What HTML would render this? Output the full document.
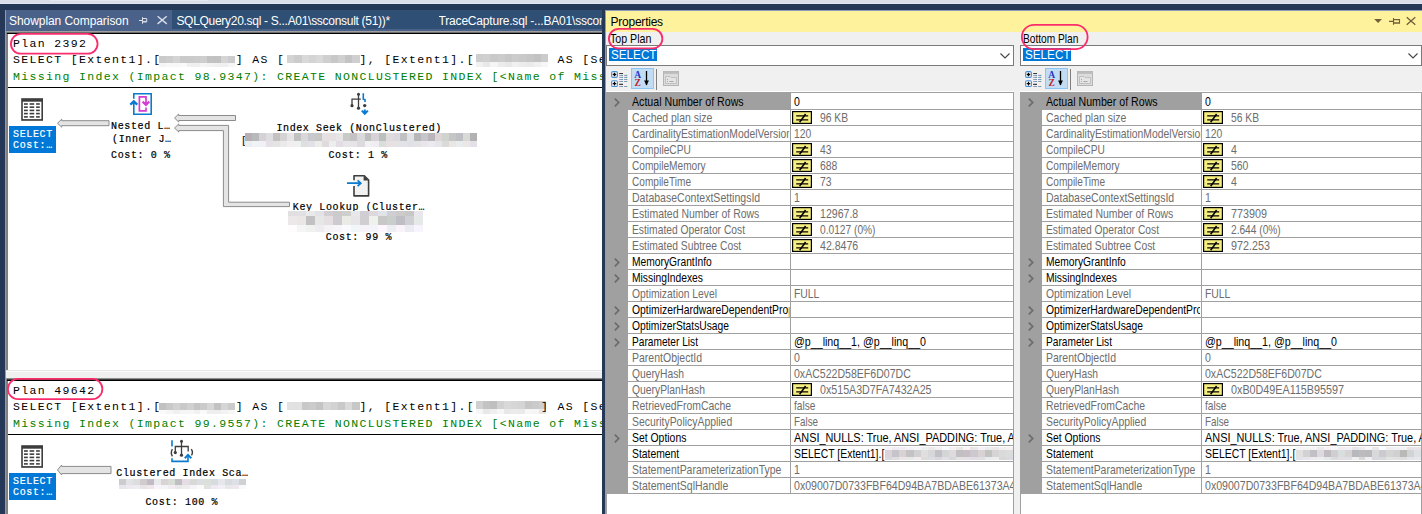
<!DOCTYPE html><html><head><meta charset="utf-8"><title>Showplan Comparison</title><style>
html,body{margin:0;padding:0;}
body{width:1422px;height:514px;overflow:hidden;background:#253858;position:relative;font-family:"Liberation Sans",sans-serif;}
#root{position:absolute;left:0;top:0;width:1422px;height:514px;overflow:hidden;}
#root div,#root span,#root svg{position:absolute;box-sizing:border-box;}
.t{white-space:pre;line-height:20px;height:20px;}
.mono{font-family:"Liberation Mono",monospace;font-size:11.5px;letter-spacing:1.35px;color:#000;}
.green{color:#008000;}
.node{font-family:"Liberation Mono",monospace;font-size:10px;letter-spacing:0.62px;color:#000;-webkit-text-stroke:0.2px #000;}
.tab{font-family:"Liberation Sans",sans-serif;font-size:12px;color:#fff;}
.ui{font-family:"Liberation Sans",sans-serif;font-size:12.2px;color:#000;transform-origin:0 0;}
.g{color:#6d6d6d;}
</style></head><body><div id="root">
<div style="left:0px;top:0px;width:1422px;height:4px;background:#DADEE9;"></div>
<div style="left:0px;top:3px;width:1422px;height:1px;background:#E2E5EE;"></div>
<div style="left:50px;top:0px;width:158px;height:1px;background:#E4E7F0;"></div>
<div style="left:600px;top:0px;width:130px;height:1px;background:#E0E3EC;"></div>
<div style="left:0px;top:4px;width:1422px;height:6px;background:#253858;"></div>
<div style="left:5px;top:10px;width:597px;height:21px;background:#2F4F74;"></div>
<div style="left:5px;top:10px;width:167px;height:21px;background:#4A6189;"></div>
<div style="left:5px;top:29px;width:597px;height:2px;background:#4A6189;"></div>
<span class="t tab" style="left:9.00px;top:11px;letter-spacing:-0.061px;">Showplan Comparison</span>
<span class="t tab" style="left:176.40px;top:11px;letter-spacing:-0.292px;">SQLQuery20.sql - S...A01\ssconsult (51))*</span>
<span class="t tab" style="left:438.60px;top:11px;width:163.40px;overflow:hidden;letter-spacing:-0.193px;">TraceCapture.sql -...BA01\sscon</span>
<svg style="left:138px;top:14px" width="30" height="14" viewBox="0 0 30 14"><g fill="none" stroke="#D9DEEA" stroke-width="1"><path d="M1 6.5h3.5M4.5 3.2v6.6M4.5 4.5h4.2v3.5h-4.2M4.5 7.4h4.2"/><path d="M19.6 2.3l9.2 7.6M28.8 2.3l-9.2 7.6" stroke-width="1.4"/></g></svg>
<div style="left:5px;top:10px;width:1px;height:504px;background:#8E9BBC;"></div>
<div style="left:6px;top:31px;width:2px;height:483px;background:#808080;"></div>
<div style="left:8px;top:34px;width:594px;height:336px;background:#fff;"></div>
<div style="left:6px;top:31px;width:596px;height:1px;background:#A0A0A0;"></div>
<div style="left:7px;top:32px;width:595px;height:1px;background:#6E6E6E;"></div>
<div style="left:7px;top:33px;width:595px;height:1px;background:#000;"></div>
<div style="left:8px;top:87px;width:594px;height:1px;background:#000;"></div>
<div style="left:6px;top:370px;width:596px;height:8px;background:#EFEFEF;"></div>
<div style="left:6px;top:370px;width:596px;height:1px;background:#E6E6E6;"></div>
<div style="left:6px;top:371px;width:596px;height:1px;background:#FAFAFA;"></div>
<div style="left:6px;top:378px;width:596px;height:1px;background:#8E8E8E;"></div>
<div style="left:7px;top:379px;width:595px;height:1px;background:#3C3C3C;"></div>
<div style="left:7px;top:380px;width:595px;height:1px;background:#000;"></div>
<div style="left:8px;top:381px;width:594px;height:133px;background:#fff;"></div>
<div style="left:8px;top:434px;width:594px;height:1px;background:#000;"></div>
<span class="t mono" style="left:13.00px;top:34px;">Plan 2392</span>
<span class="t mono" style="left:13.00px;top:50px;">SELECT [Extent1].[</span>
<span class="t mono" style="left:235.75px;top:50px;">] AS [</span>
<span class="t mono" style="left:359.50px;top:50px;">], [Extent1].[</span>
<span class="t mono" style="left:549.25px;top:50px;width:52.75px;overflow:hidden;"> AS [Se</span>
<div style="left:159.3px;top:56.1px;width:75.8px;height:7.0px;background:linear-gradient(90deg,rgb(202,202,202) 0.0px,rgb(202,202,202) 6.9px,rgb(205,205,205) 6.9px,rgb(205,205,205) 13.8px,rgb(212,212,212) 13.8px,rgb(212,212,212) 20.7px,rgb(202,202,202) 20.7px,rgb(202,202,202) 27.6px,rgb(202,202,202) 27.6px,rgb(202,202,202) 34.5px,rgb(204,204,204) 34.5px,rgb(204,204,204) 41.3px,rgb(206,206,206) 41.3px,rgb(206,206,206) 48.2px,rgb(194,194,194) 48.2px,rgb(194,194,194) 55.1px,rgb(193,193,193) 55.1px,rgb(193,193,193) 62.0px,rgb(213,213,213) 62.0px,rgb(213,213,213) 68.9px,rgb(204,204,204) 68.9px,rgb(204,204,204) 75.8px);"></div>
<div style="left:159.3px;top:63.1px;width:75.8px;height:3.8px;background:linear-gradient(90deg,rgb(245,245,245) 0.0px,rgb(245,245,245) 6.9px,rgb(248,248,248) 6.9px,rgb(248,248,248) 13.8px,rgb(247,247,247) 13.8px,rgb(247,247,247) 20.7px,rgb(250,250,250) 20.7px,rgb(250,250,250) 27.6px,rgb(240,240,240) 27.6px,rgb(240,240,240) 34.5px,rgb(239,239,239) 34.5px,rgb(239,239,239) 41.3px,rgb(245,245,245) 41.3px,rgb(245,245,245) 48.2px,rgb(242,242,242) 48.2px,rgb(242,242,242) 55.1px,rgb(240,240,240) 55.1px,rgb(240,240,240) 62.0px,rgb(239,239,239) 62.0px,rgb(239,239,239) 68.9px,rgb(246,246,246) 68.9px,rgb(246,246,246) 75.8px);"></div>
<div style="left:287.2px;top:55.1px;width:72.6px;height:8.0px;background:linear-gradient(90deg,rgb(211,211,211) 0.0px,rgb(211,211,211) 7.3px,rgb(204,204,204) 7.3px,rgb(204,204,204) 14.5px,rgb(217,217,217) 14.5px,rgb(217,217,217) 21.8px,rgb(212,212,212) 21.8px,rgb(212,212,212) 29.0px,rgb(217,217,217) 29.0px,rgb(217,217,217) 36.3px,rgb(207,207,207) 36.3px,rgb(207,207,207) 43.6px,rgb(200,200,200) 43.6px,rgb(200,200,200) 50.8px,rgb(208,208,208) 50.8px,rgb(208,208,208) 58.1px,rgb(196,196,196) 58.1px,rgb(196,196,196) 65.3px,rgb(207,207,207) 65.3px,rgb(207,207,207) 72.6px);"></div>
<div style="left:475.6px;top:54.1px;width:72.0px;height:8.2px;background:linear-gradient(90deg,rgb(206,206,206) 0.0px,rgb(206,206,206) 7.2px,rgb(208,208,208) 7.2px,rgb(208,208,208) 14.4px,rgb(201,201,201) 14.4px,rgb(201,201,201) 21.6px,rgb(204,204,204) 21.6px,rgb(204,204,204) 28.8px,rgb(199,199,199) 28.8px,rgb(199,199,199) 36.0px,rgb(204,204,204) 36.0px,rgb(204,204,204) 43.2px,rgb(201,201,201) 43.2px,rgb(201,201,201) 50.4px,rgb(198,198,198) 50.4px,rgb(198,198,198) 57.6px,rgb(194,194,194) 57.6px,rgb(194,194,194) 64.8px,rgb(203,203,203) 64.8px,rgb(203,203,203) 72.0px);"></div>
<div style="left:475.6px;top:62.3px;width:72.0px;height:4.6px;background:linear-gradient(90deg,rgb(241,241,241) 0.0px,rgb(241,241,241) 7.2px,rgb(232,232,232) 7.2px,rgb(232,232,232) 14.4px,rgb(245,245,245) 14.4px,rgb(245,245,245) 21.6px,rgb(236,236,236) 21.6px,rgb(236,236,236) 28.8px,rgb(232,232,232) 28.8px,rgb(232,232,232) 36.0px,rgb(240,240,240) 36.0px,rgb(240,240,240) 43.2px,rgb(236,236,236) 43.2px,rgb(236,236,236) 50.4px,rgb(234,234,234) 50.4px,rgb(234,234,234) 57.6px,rgb(240,240,240) 57.6px,rgb(240,240,240) 64.8px,rgb(246,246,246) 64.8px,rgb(246,246,246) 72.0px);"></div>
<span class="t mono green" style="left:13.00px;top:67px;width:589.00px;overflow:hidden;">Missing Index (Impact 98.9347): CREATE NONCLUSTERED INDEX [&lt;Name of Miss</span>
<span class="t mono" style="left:13.00px;top:381px;">Plan 49642</span>
<span class="t mono" style="left:13.00px;top:397px;">SELECT [Extent1].[</span>
<span class="t mono" style="left:235.75px;top:397px;">] AS [</span>
<span class="t mono" style="left:359.50px;top:397px;">], [Extent1].[</span>
<span class="t mono" style="left:549.25px;top:397px;width:52.75px;overflow:hidden;"> AS [Se</span>
<div style="left:159.3px;top:403.1px;width:75.8px;height:7.0px;background:linear-gradient(90deg,rgb(193,193,193) 0.0px,rgb(193,193,193) 6.9px,rgb(201,201,201) 6.9px,rgb(201,201,201) 13.8px,rgb(210,210,210) 13.8px,rgb(210,210,210) 20.7px,rgb(201,201,201) 20.7px,rgb(201,201,201) 27.6px,rgb(208,208,208) 27.6px,rgb(208,208,208) 34.5px,rgb(197,197,197) 34.5px,rgb(197,197,197) 41.3px,rgb(203,203,203) 41.3px,rgb(203,203,203) 48.2px,rgb(214,214,214) 48.2px,rgb(214,214,214) 55.1px,rgb(194,194,194) 55.1px,rgb(194,194,194) 62.0px,rgb(213,213,213) 62.0px,rgb(213,213,213) 68.9px,rgb(203,203,203) 68.9px,rgb(203,203,203) 75.8px);"></div>
<div style="left:159.3px;top:410.1px;width:75.8px;height:3.8px;background:linear-gradient(90deg,rgb(250,250,250) 0.0px,rgb(250,250,250) 6.9px,rgb(246,246,246) 6.9px,rgb(246,246,246) 13.8px,rgb(240,240,240) 13.8px,rgb(240,240,240) 20.7px,rgb(246,246,246) 20.7px,rgb(246,246,246) 27.6px,rgb(246,246,246) 27.6px,rgb(246,246,246) 34.5px,rgb(241,241,241) 34.5px,rgb(241,241,241) 41.3px,rgb(250,250,250) 41.3px,rgb(250,250,250) 48.2px,rgb(238,238,238) 48.2px,rgb(238,238,238) 55.1px,rgb(238,238,238) 55.1px,rgb(238,238,238) 62.0px,rgb(243,243,243) 62.0px,rgb(243,243,243) 68.9px,rgb(247,247,247) 68.9px,rgb(247,247,247) 75.8px);"></div>
<div style="left:287.2px;top:402.1px;width:72.6px;height:8.0px;background:linear-gradient(90deg,rgb(226,226,226) 0.0px,rgb(226,226,226) 7.3px,rgb(225,225,225) 7.3px,rgb(225,225,225) 14.5px,rgb(200,200,200) 14.5px,rgb(200,200,200) 21.8px,rgb(203,203,203) 21.8px,rgb(203,203,203) 29.0px,rgb(196,196,196) 29.0px,rgb(196,196,196) 36.3px,rgb(215,215,215) 36.3px,rgb(215,215,215) 43.6px,rgb(210,210,210) 43.6px,rgb(210,210,210) 50.8px,rgb(201,201,201) 50.8px,rgb(201,201,201) 58.1px,rgb(218,218,218) 58.1px,rgb(218,218,218) 65.3px,rgb(199,199,199) 65.3px,rgb(199,199,199) 72.6px);"></div>
<div style="left:475.6px;top:401.1px;width:70.4px;height:8.2px;background:linear-gradient(90deg,rgb(208,208,208) 0.0px,rgb(208,208,208) 7.0px,rgb(195,195,195) 7.0px,rgb(195,195,195) 14.1px,rgb(191,191,191) 14.1px,rgb(191,191,191) 21.1px,rgb(209,209,209) 21.1px,rgb(209,209,209) 28.2px,rgb(217,217,217) 28.2px,rgb(217,217,217) 35.2px,rgb(214,214,214) 35.2px,rgb(214,214,214) 42.2px,rgb(212,212,212) 42.2px,rgb(212,212,212) 49.3px,rgb(198,198,198) 49.3px,rgb(198,198,198) 56.3px,rgb(202,202,202) 56.3px,rgb(202,202,202) 63.4px,rgb(207,207,207) 63.4px,rgb(207,207,207) 70.4px);"></div>
<div style="left:475.6px;top:409.3px;width:70.4px;height:4.6px;background:linear-gradient(90deg,rgb(246,246,246) 0.0px,rgb(246,246,246) 7.0px,rgb(232,232,232) 7.0px,rgb(232,232,232) 14.1px,rgb(239,239,239) 14.1px,rgb(239,239,239) 21.1px,rgb(246,246,246) 21.1px,rgb(246,246,246) 28.2px,rgb(232,232,232) 28.2px,rgb(232,232,232) 35.2px,rgb(235,235,235) 35.2px,rgb(235,235,235) 42.2px,rgb(234,234,234) 42.2px,rgb(234,234,234) 49.3px,rgb(247,247,247) 49.3px,rgb(247,247,247) 56.3px,rgb(245,245,245) 56.3px,rgb(245,245,245) 63.4px,rgb(232,232,232) 63.4px,rgb(232,232,232) 70.4px);"></div>
<span class="t mono" style="left:541.00px;top:397px;">]</span>
<span class="t mono green" style="left:13.00px;top:414px;width:589.00px;overflow:hidden;">Missing Index (Impact 99.9557): CREATE NONCLUSTERED INDEX [&lt;Name of Miss</span>
<svg style="left:14px;top:92px" width="36" height="32" viewBox="0 0 36 32"><rect x="7.2" y="6.2" width="21.8" height="22.6" fill="#3d3d3d"/><rect x="8.8" y="9.7" width="18.6" height="17.4" fill="#fff"/><rect x="10" y="11.20" width="3.8" height="1.6" fill="#3d3d3d"/><rect x="15.6" y="11.20" width="4.6" height="1.6" fill="#3d3d3d"/><rect x="22.1" y="11.20" width="3.7" height="1.6" fill="#3d3d3d"/><rect x="10" y="14.35" width="3.8" height="1.6" fill="#3d3d3d"/><rect x="15.6" y="14.35" width="4.6" height="1.6" fill="#3d3d3d"/><rect x="22.1" y="14.35" width="3.7" height="1.6" fill="#3d3d3d"/><rect x="10" y="17.60" width="3.8" height="1.6" fill="#3d3d3d"/><rect x="15.6" y="17.60" width="4.6" height="1.6" fill="#3d3d3d"/><rect x="22.1" y="17.60" width="3.7" height="1.6" fill="#3d3d3d"/><rect x="10" y="20.80" width="3.8" height="1.6" fill="#3d3d3d"/><rect x="15.6" y="20.80" width="4.6" height="1.6" fill="#3d3d3d"/><rect x="22.1" y="20.80" width="3.7" height="1.6" fill="#3d3d3d"/><rect x="10" y="24.10" width="3.8" height="1.6" fill="#3d3d3d"/><rect x="15.6" y="24.10" width="4.6" height="1.6" fill="#3d3d3d"/><rect x="22.1" y="24.10" width="3.7" height="1.6" fill="#3d3d3d"/></svg>
<div style="left:9px;top:126px;width:47px;height:27px;background:#0078D7;"></div>
<span class="t node" style="left:13.10px;top:125px;color:#fff;-webkit-text-stroke:0.2px #fff;">SELECT</span>
<span class="t node" style="left:13.10px;top:136px;color:#fff;-webkit-text-stroke:0.2px #fff;">Cost:…</span>
<svg style="left:0;top:0" width="602" height="514" viewBox="0 0 602 514"><path d="M57.5 123.2L61.7 119.2V120.7H109V125.7H61.7V127.2Z" fill="#e4e4e4" stroke="#8c8c8c" stroke-width="1"/></svg>
<svg style="left:123px;top:88px" width="36" height="32" viewBox="0 0 36 32" fill="none"><path d="M10.8 10.8V5.8H28.2V26.3H10.8V14.5" stroke="#0a7bd0" stroke-width="1.6"/><path d="M7.3 16.6L10.8 13.2L14.3 16.6" stroke="#0a7bd0" stroke-width="2.2"/><path d="M8.3 16.2L10.8 13.6L13.3 16.2Z" fill="#0a7bd0"/><path d="M23 19.6V22.9H16.4V8.9H23V16.5" stroke="#d83bd2" stroke-width="1.7"/><path d="M19.6 13.6L23 17L26.3 13.6" stroke="#d83bd2" stroke-width="2.2"/><path d="M20.6 14L23 16.6L25.4 14Z" fill="#d83bd2"/></svg>
<span class="t node" style="left:111.10px;top:117px;">Nested L…</span>
<span class="t node" style="left:112.10px;top:130px;">(Inner J…</span>
<span class="t node" style="left:111.10px;top:146px;">Cost: 0 %</span>
<svg style="left:0;top:0" width="602" height="514" viewBox="0 0 602 514"><path d="M174.5 118L178.7 114.0V115.5H235.5V120.5H178.7V122.0Z" fill="#e4e4e4" stroke="#8c8c8c" stroke-width="1"/></svg>
<svg style="left:0;top:0" width="602" height="514" viewBox="0 0 602 514"><path d="M174.5 128L178.7 124V125.4H228.6V202.2H289.5V206.6H223.4V130.6H178.7V132Z" fill="#e4e4e4" stroke="#8c8c8c" stroke-width="1"/></svg>
<svg style="left:342px;top:88px" width="36" height="32" viewBox="0 0 36 32" fill="none"><path d="M16.5 6.2V20.2M18.8 11.2H10V17.7" stroke="#3d3d3d" stroke-width="1.3"/><circle cx="16.5" cy="6.2" r="1.5" fill="#3d3d3d"/><circle cx="16.5" cy="20.2" r="1.6" fill="#3d3d3d"/><circle cx="10" cy="17.7" r="1.6" fill="#3d3d3d"/><circle cx="22.7" cy="17.6" r="1.7" fill="#3d3d3d"/><path d="M21.3 5.2V11.2L23 11.6V14" stroke="#0a7bd0" stroke-width="1.6"/><path d="M19.8 22.6L22.8 25.8L25.9 22.6M22.8 21.5V25.5" stroke="#0a7bd0" stroke-width="2"/></svg>
<span class="t node" style="left:276.40px;top:119px;">Index Seek (NonClustered)</span>
<span class="t node" style="left:241.10px;top:132px;color:#223;">[</span>
<div style="left:244.8px;top:133.2px;width:232.0px;height:7.6px;background:linear-gradient(90deg,rgb(182,175,182) 0.0px,rgb(182,175,182) 7.0px,rgb(184,185,186) 7.0px,rgb(184,185,186) 14.1px,rgb(212,210,212) 14.1px,rgb(212,210,212) 21.1px,rgb(222,221,225) 21.1px,rgb(222,221,225) 28.1px,rgb(196,194,193) 28.1px,rgb(196,194,193) 35.2px,rgb(213,212,213) 35.2px,rgb(213,212,213) 42.2px,rgb(230,228,228) 42.2px,rgb(230,228,228) 49.2px,rgb(193,193,194) 49.2px,rgb(193,193,194) 56.2px,rgb(216,215,217) 56.2px,rgb(216,215,217) 63.3px,rgb(201,200,204) 63.3px,rgb(201,200,204) 70.3px,rgb(199,199,200) 70.3px,rgb(199,199,200) 77.3px,rgb(231,224,227) 77.3px,rgb(231,224,227) 84.4px,rgb(229,224,226) 84.4px,rgb(229,224,226) 91.4px,rgb(231,229,229) 91.4px,rgb(231,229,229) 98.4px,rgb(199,202,197) 98.4px,rgb(199,202,197) 105.5px,rgb(196,194,197) 105.5px,rgb(196,194,197) 112.5px,rgb(217,217,217) 112.5px,rgb(217,217,217) 119.5px,rgb(189,191,191) 119.5px,rgb(189,191,191) 126.5px,rgb(214,210,213) 126.5px,rgb(214,210,213) 133.6px,rgb(187,191,189) 133.6px,rgb(187,191,189) 140.6px,rgb(223,220,222) 140.6px,rgb(223,220,222) 147.6px,rgb(219,216,224) 147.6px,rgb(219,216,224) 154.7px,rgb(192,193,194) 154.7px,rgb(192,193,194) 161.7px,rgb(225,225,230) 161.7px,rgb(225,225,230) 168.7px,rgb(182,183,185) 168.7px,rgb(182,183,185) 175.8px,rgb(198,197,204) 175.8px,rgb(198,197,204) 182.8px,rgb(185,181,184) 182.8px,rgb(185,181,184) 189.8px,rgb(221,213,216) 189.8px,rgb(221,213,216) 196.8px,rgb(208,212,207) 196.8px,rgb(208,212,207) 203.9px,rgb(198,197,197) 203.9px,rgb(198,197,197) 210.9px,rgb(190,190,197) 210.9px,rgb(190,190,197) 217.9px,rgb(216,218,215) 217.9px,rgb(216,218,215) 225.0px,rgb(179,177,178) 225.0px,rgb(179,177,178) 232.0px);"></div>
<div style="left:244.8px;top:140.8px;width:232.0px;height:5.9px;background:linear-gradient(90deg,rgb(237,236,239) 0.0px,rgb(237,236,239) 7.0px,rgb(239,243,246) 7.0px,rgb(239,243,246) 14.1px,rgb(243,239,246) 14.1px,rgb(243,239,246) 21.1px,rgb(228,224,229) 21.1px,rgb(228,224,229) 28.1px,rgb(227,229,227) 28.1px,rgb(227,229,227) 35.2px,rgb(236,233,236) 35.2px,rgb(236,233,236) 42.2px,rgb(243,238,238) 42.2px,rgb(243,238,238) 49.2px,rgb(237,241,240) 49.2px,rgb(237,241,240) 56.2px,rgb(222,224,224) 56.2px,rgb(222,224,224) 63.3px,rgb(227,224,230) 63.3px,rgb(227,224,230) 70.3px,rgb(236,236,234) 70.3px,rgb(236,236,234) 77.3px,rgb(223,219,221) 77.3px,rgb(223,219,221) 84.4px,rgb(235,237,238) 84.4px,rgb(235,237,238) 91.4px,rgb(227,220,229) 91.4px,rgb(227,220,229) 98.4px,rgb(230,229,231) 98.4px,rgb(230,229,231) 105.5px,rgb(230,228,231) 105.5px,rgb(230,228,231) 112.5px,rgb(221,218,222) 112.5px,rgb(221,218,222) 119.5px,rgb(241,240,242) 119.5px,rgb(241,240,242) 126.5px,rgb(239,236,242) 126.5px,rgb(239,236,242) 133.6px,rgb(217,222,219) 133.6px,rgb(217,222,219) 140.6px,rgb(231,223,225) 140.6px,rgb(231,223,225) 147.6px,rgb(229,226,228) 147.6px,rgb(229,226,228) 154.7px,rgb(227,227,231) 154.7px,rgb(227,227,231) 161.7px,rgb(225,223,231) 161.7px,rgb(225,223,231) 168.7px,rgb(226,227,226) 168.7px,rgb(226,227,226) 175.8px,rgb(233,229,234) 175.8px,rgb(233,229,234) 182.8px,rgb(235,234,238) 182.8px,rgb(235,234,238) 189.8px,rgb(230,229,234) 189.8px,rgb(230,229,234) 196.8px,rgb(219,218,217) 196.8px,rgb(219,218,217) 203.9px,rgb(233,231,230) 203.9px,rgb(233,231,230) 210.9px,rgb(232,236,236) 210.9px,rgb(232,236,236) 217.9px,rgb(236,231,231) 217.9px,rgb(236,231,231) 225.0px,rgb(229,223,231) 225.0px,rgb(229,223,231) 232.0px);"></div>
<span class="t node" style="left:328.40px;top:146px;">Cost: 1 %</span>
<svg style="left:342px;top:169px" width="36" height="32" viewBox="0 0 36 32" fill="none"><path d="M12 6.7H22.3L26.6 11V26.9H12Z" fill="#f2f2f2"/><path d="M12 11.3V6.7H22.3L26.6 11V26.9H12V17" stroke="#3d3d3d" stroke-width="1.6" stroke-linejoin="round"/><path d="M21.6 6.7L26.6 11.6H21.6Z" fill="#3d3d3d"/><path d="M5 14.2H18.6M15.6 11.3L18.8 14.2L15.6 17.2" stroke="#0a7bd0" stroke-width="1.7"/></svg>
<span class="t node" style="left:292.80px;top:198px;">Key Lookup (Cluster…</span>
<div style="left:288.0px;top:211.2px;width:135.0px;height:5.0px;background:linear-gradient(90deg,rgb(226,223,224) 0.0px,rgb(226,223,224) 9.0px,rgb(225,224,228) 9.0px,rgb(225,224,228) 18.0px,rgb(233,235,234) 18.0px,rgb(233,235,234) 27.0px,rgb(227,226,231) 27.0px,rgb(227,226,231) 36.0px,rgb(211,206,209) 36.0px,rgb(211,206,209) 45.0px,rgb(205,202,203) 45.0px,rgb(205,202,203) 54.0px,rgb(206,207,204) 54.0px,rgb(206,207,204) 63.0px,rgb(232,232,234) 63.0px,rgb(232,232,234) 72.0px,rgb(208,205,211) 72.0px,rgb(208,205,211) 81.0px,rgb(220,216,220) 81.0px,rgb(220,216,220) 90.0px,rgb(224,227,231) 90.0px,rgb(224,227,231) 99.0px,rgb(207,206,213) 99.0px,rgb(207,206,213) 108.0px,rgb(205,203,202) 108.0px,rgb(205,203,202) 117.0px,rgb(199,199,200) 117.0px,rgb(199,199,200) 126.0px,rgb(232,231,235) 126.0px,rgb(232,231,235) 135.0px);"></div>
<div style="left:288.0px;top:216.2px;width:135.0px;height:9.0px;background:linear-gradient(90deg,rgb(236,231,233) 0.0px,rgb(236,231,233) 9.0px,rgb(233,230,229) 9.0px,rgb(233,230,229) 18.0px,rgb(194,192,195) 18.0px,rgb(194,192,195) 27.0px,rgb(229,232,229) 27.0px,rgb(229,232,229) 36.0px,rgb(229,223,227) 36.0px,rgb(229,223,227) 45.0px,rgb(205,203,207) 45.0px,rgb(205,203,207) 54.0px,rgb(234,234,230) 54.0px,rgb(234,234,230) 63.0px,rgb(231,229,231) 63.0px,rgb(231,229,231) 72.0px,rgb(208,206,209) 72.0px,rgb(208,206,209) 81.0px,rgb(239,241,237) 81.0px,rgb(239,241,237) 90.0px,rgb(200,200,199) 90.0px,rgb(200,200,199) 99.0px,rgb(201,205,203) 99.0px,rgb(201,205,203) 108.0px,rgb(192,190,197) 108.0px,rgb(192,190,197) 117.0px,rgb(207,208,213) 117.0px,rgb(207,208,213) 126.0px,rgb(229,234,232) 126.0px,rgb(229,234,232) 135.0px);"></div>
<div style="left:288.0px;top:225.2px;width:135.0px;height:6.6px;background:linear-gradient(90deg,rgb(254,252,253) 0.0px,rgb(254,252,253) 9.0px,rgb(244,245,247) 9.0px,rgb(244,245,247) 18.0px,rgb(239,242,239) 18.0px,rgb(239,242,239) 27.0px,rgb(239,236,241) 27.0px,rgb(239,236,241) 36.0px,rgb(246,243,247) 36.0px,rgb(246,243,247) 45.0px,rgb(248,245,250) 45.0px,rgb(248,245,250) 54.0px,rgb(250,251,254) 54.0px,rgb(250,251,254) 63.0px,rgb(241,246,248) 63.0px,rgb(241,246,248) 72.0px,rgb(247,241,248) 72.0px,rgb(247,241,248) 81.0px,rgb(243,244,250) 81.0px,rgb(243,244,250) 90.0px,rgb(254,247,255) 90.0px,rgb(254,247,255) 99.0px,rgb(236,238,241) 99.0px,rgb(236,238,241) 108.0px,rgb(248,244,250) 108.0px,rgb(248,244,250) 117.0px,rgb(236,234,242) 117.0px,rgb(236,234,242) 126.0px,rgb(247,244,254) 126.0px,rgb(247,244,254) 135.0px);"></div>
<span class="t node" style="left:325.80px;top:228px;">Cost: 99 %</span>
<svg style="left:14px;top:439.2px" width="36" height="32" viewBox="0 0 36 32"><rect x="7.2" y="6.2" width="21.8" height="22.6" fill="#3d3d3d"/><rect x="8.8" y="9.7" width="18.6" height="17.4" fill="#fff"/><rect x="10" y="11.20" width="3.8" height="1.6" fill="#3d3d3d"/><rect x="15.6" y="11.20" width="4.6" height="1.6" fill="#3d3d3d"/><rect x="22.1" y="11.20" width="3.7" height="1.6" fill="#3d3d3d"/><rect x="10" y="14.35" width="3.8" height="1.6" fill="#3d3d3d"/><rect x="15.6" y="14.35" width="4.6" height="1.6" fill="#3d3d3d"/><rect x="22.1" y="14.35" width="3.7" height="1.6" fill="#3d3d3d"/><rect x="10" y="17.60" width="3.8" height="1.6" fill="#3d3d3d"/><rect x="15.6" y="17.60" width="4.6" height="1.6" fill="#3d3d3d"/><rect x="22.1" y="17.60" width="3.7" height="1.6" fill="#3d3d3d"/><rect x="10" y="20.80" width="3.8" height="1.6" fill="#3d3d3d"/><rect x="15.6" y="20.80" width="4.6" height="1.6" fill="#3d3d3d"/><rect x="22.1" y="20.80" width="3.7" height="1.6" fill="#3d3d3d"/><rect x="10" y="24.10" width="3.8" height="1.6" fill="#3d3d3d"/><rect x="15.6" y="24.10" width="4.6" height="1.6" fill="#3d3d3d"/><rect x="22.1" y="24.10" width="3.7" height="1.6" fill="#3d3d3d"/></svg>
<div style="left:9px;top:473px;width:47px;height:27px;background:#0078D7;"></div>
<span class="t node" style="left:13.10px;top:472px;color:#fff;-webkit-text-stroke:0.2px #fff;">SELECT</span>
<span class="t node" style="left:13.10px;top:483px;color:#fff;-webkit-text-stroke:0.2px #fff;">Cost:…</span>
<svg style="left:0;top:0" width="602" height="514" viewBox="0 0 602 514"><path d="M57.5 470L61.7 465.0V466.4H111V473.6H61.7V475.0Z" fill="#e4e4e4" stroke="#8c8c8c" stroke-width="1"/></svg>
<svg style="left:163px;top:435px" width="36" height="32" viewBox="0 0 36 32" fill="none"><path d="M18.5 6.2V20.2M12.3 17.6V11.5H25.2V16.6" stroke="#3d3d3d" stroke-width="1.3"/><circle cx="18.5" cy="6.2" r="1.5" fill="#3d3d3d"/><circle cx="18.5" cy="20.2" r="1.6" fill="#3d3d3d"/><circle cx="12.3" cy="17.6" r="1.6" fill="#3d3d3d"/><path d="M9.4 14.2Q7.2 17.8 9.4 21.4M28.3 14.2Q30.5 17.4 28.5 20.4" stroke="#3d3d3d" stroke-width="1.4"/><path d="M9 5.2V11.6M9 23.2V26.4H25V21" stroke="#0a7bd0" stroke-width="1.6"/><path d="M21.8 23.2L25 19.9L28.3 23.2" stroke="#0a7bd0" stroke-width="2"/></svg>
<span class="t node" style="left:116.30px;top:464px;">Clustered Index Sca…</span>
<div style="left:118.6px;top:478.7px;width:127.0px;height:6.2px;background:linear-gradient(90deg,rgb(204,204,206) 0.0px,rgb(204,204,206) 7.1px,rgb(226,227,231) 7.1px,rgb(226,227,231) 14.1px,rgb(221,220,223) 14.1px,rgb(221,220,223) 21.2px,rgb(210,203,206) 21.2px,rgb(210,203,206) 28.2px,rgb(192,187,196) 28.2px,rgb(192,187,196) 35.3px,rgb(232,234,235) 35.3px,rgb(232,234,235) 42.3px,rgb(217,212,211) 42.3px,rgb(217,212,211) 49.4px,rgb(217,221,216) 49.4px,rgb(217,221,216) 56.4px,rgb(191,190,193) 56.4px,rgb(191,190,193) 63.5px,rgb(229,221,229) 63.5px,rgb(229,221,229) 70.6px,rgb(216,217,215) 70.6px,rgb(216,217,215) 77.6px,rgb(220,222,226) 77.6px,rgb(220,222,226) 84.7px,rgb(219,224,219) 84.7px,rgb(219,224,219) 91.7px,rgb(214,220,223) 91.7px,rgb(214,220,223) 98.8px,rgb(229,231,237) 98.8px,rgb(229,231,237) 105.8px,rgb(216,220,223) 105.8px,rgb(216,220,223) 112.9px,rgb(221,225,229) 112.9px,rgb(221,225,229) 119.9px,rgb(207,210,212) 119.9px,rgb(207,210,212) 127.0px);"></div>
<div style="left:118.6px;top:484.9px;width:127.0px;height:4.0px;background:linear-gradient(90deg,rgb(228,232,236) 0.0px,rgb(228,232,236) 7.1px,rgb(238,233,240) 7.1px,rgb(238,233,240) 14.1px,rgb(237,236,241) 14.1px,rgb(237,236,241) 21.2px,rgb(232,227,228) 21.2px,rgb(232,227,228) 28.2px,rgb(238,230,234) 28.2px,rgb(238,230,234) 35.3px,rgb(249,243,252) 35.3px,rgb(249,243,252) 42.3px,rgb(242,244,246) 42.3px,rgb(242,244,246) 49.4px,rgb(243,236,242) 49.4px,rgb(243,236,242) 56.4px,rgb(232,231,233) 56.4px,rgb(232,231,233) 63.5px,rgb(237,237,238) 63.5px,rgb(237,237,238) 70.6px,rgb(246,244,248) 70.6px,rgb(246,244,248) 77.6px,rgb(250,251,247) 77.6px,rgb(250,251,247) 84.7px,rgb(224,227,226) 84.7px,rgb(224,227,226) 91.7px,rgb(239,234,242) 91.7px,rgb(239,234,242) 98.8px,rgb(244,238,248) 98.8px,rgb(244,238,248) 105.8px,rgb(230,234,231) 105.8px,rgb(230,234,231) 112.9px,rgb(238,231,239) 112.9px,rgb(238,231,239) 119.9px,rgb(247,249,250) 119.9px,rgb(247,249,250) 127.0px);"></div>
<span class="t node" style="left:145.40px;top:493px;">Cost: 100 %</span>
<div style="left:605px;top:10px;width:817px;height:1px;background:#8E9BBC;"></div>
<div style="left:605px;top:10px;width:1px;height:504px;background:#8E9BBC;"></div>
<div style="left:606px;top:11px;width:816px;height:21px;background:#FFF29D;"></div>
<span class="t tab" style="left:610.50px;top:12px;letter-spacing:-0.232px;color:#000;">Properties</span>
<div style="left:606px;top:32px;width:816px;height:482px;background:#F0F0F0;"></div>
<span class="t ui" style="left:609.70px;top:29px;transform:scaleX(0.8727);">Top Plan</span>
<div style="left:606px;top:45px;width:408px;height:21px;background:#fff;border:1px solid #7A7A7A;"></div>
<div style="left:609px;top:48px;width:48px;height:13px;background:#0078D7;"></div>
<span class="t ui" style="left:610.50px;top:45px;transform:scaleX(0.9595);color:#fff;">SELECT</span>
<svg style="left:999px;top:52px" width="12" height="8" viewBox="0 0 12 8"><path d="M1.5 1.5l4.5 4.5l4.5-4.5" fill="none" stroke="#444" stroke-width="1.1"/></svg>
<div style="left:606px;top:92px;width:408px;height:422px;background:#fff;border-left:1px solid #A0A0A0;border-top:1px solid #A0A0A0;border-right:1px solid #A0A0A0;"></div>
<div style="left:607px;top:93px;width:21px;height:401px;background:#A0A0A0;"></div>
<div style="left:790px;top:93px;width:1px;height:400px;background:#A0A0A0;"></div>
<div style="left:628px;top:109px;width:385px;height:1px;background:#A0A0A0;"></div>
<div style="left:628px;top:93px;width:162px;height:16px;background:#A0A0A0;"></div>
<span class="t ui" style="left:631.80px;top:92px;transform:scaleX(0.8724);width:180.41px;overflow:hidden;">Actual Number of Rows</span>
<svg style="left:613px;top:96px" width="8" height="12" viewBox="0 0 8 12"><path d="M1.8 2.6l3.9 3.9l-3.9 3.9" fill="none" stroke="#6c6c6c" stroke-width="1.75"/></svg>
<span class="t ui" style="left:793.90px;top:92px;transform:scaleX(0.8680);width:252.42px;overflow:hidden;">0</span>
<div style="left:628px;top:125px;width:385px;height:1px;background:#A0A0A0;"></div>
<span class="t ui g" style="left:631.80px;top:108px;transform:scaleX(0.8599);width:183.05px;overflow:hidden;">Cached plan size</span>
<svg style="left:792px;top:111px" width="20" height="13" viewBox="0 0 20 13"><rect x="0.6" y="0.6" width="18.8" height="11.8" fill="#F6EE80" stroke="#000" stroke-width="1.2"/><path d="M4.2 4.9h12M4.2 8.9h12" stroke="#000" stroke-width="1.35" fill="none"/><path d="M7.6 11.2Q10.6 7.4 13.6 3" stroke="#000" stroke-width="1.5" fill="none"/></svg>
<span class="t ui g" style="left:820.00px;top:108px;transform:scaleX(0.8463);width:228.05px;overflow:hidden;">96 KB</span>
<div style="left:628px;top:141px;width:385px;height:1px;background:#A0A0A0;"></div>
<span class="t ui g" style="left:631.80px;top:124px;transform:scaleX(0.8499);width:185.19px;overflow:hidden;">CardinalityEstimationModelVersion</span>
<span class="t ui g" style="left:793.90px;top:124px;transform:scaleX(0.8504);width:257.65px;overflow:hidden;">120</span>
<div style="left:628px;top:157px;width:385px;height:1px;background:#A0A0A0;"></div>
<span class="t ui g" style="left:631.80px;top:140px;transform:scaleX(0.8348);width:188.55px;overflow:hidden;">CompileCPU</span>
<svg style="left:792px;top:143px" width="20" height="13" viewBox="0 0 20 13"><rect x="0.6" y="0.6" width="18.8" height="11.8" fill="#F6EE80" stroke="#000" stroke-width="1.2"/><path d="M4.2 4.9h12M4.2 8.9h12" stroke="#000" stroke-width="1.35" fill="none"/><path d="M7.6 11.2Q10.6 7.4 13.6 3" stroke="#000" stroke-width="1.5" fill="none"/></svg>
<span class="t ui g" style="left:820.00px;top:140px;transform:scaleX(0.8479);width:227.61px;overflow:hidden;">43</span>
<div style="left:628px;top:173px;width:385px;height:1px;background:#A0A0A0;"></div>
<span class="t ui g" style="left:631.80px;top:156px;transform:scaleX(0.8296);width:189.73px;overflow:hidden;">CompileMemory</span>
<svg style="left:792px;top:159px" width="20" height="13" viewBox="0 0 20 13"><rect x="0.6" y="0.6" width="18.8" height="11.8" fill="#F6EE80" stroke="#000" stroke-width="1.2"/><path d="M4.2 4.9h12M4.2 8.9h12" stroke="#000" stroke-width="1.35" fill="none"/><path d="M7.6 11.2Q10.6 7.4 13.6 3" stroke="#000" stroke-width="1.5" fill="none"/></svg>
<span class="t ui g" style="left:820.00px;top:156px;transform:scaleX(0.8553);width:225.65px;overflow:hidden;">688</span>
<div style="left:628px;top:189px;width:385px;height:1px;background:#A0A0A0;"></div>
<span class="t ui g" style="left:631.80px;top:172px;transform:scaleX(0.8270);width:190.33px;overflow:hidden;">CompileTime</span>
<svg style="left:792px;top:175px" width="20" height="13" viewBox="0 0 20 13"><rect x="0.6" y="0.6" width="18.8" height="11.8" fill="#F6EE80" stroke="#000" stroke-width="1.2"/><path d="M4.2 4.9h12M4.2 8.9h12" stroke="#000" stroke-width="1.35" fill="none"/><path d="M7.6 11.2Q10.6 7.4 13.6 3" stroke="#000" stroke-width="1.5" fill="none"/></svg>
<span class="t ui g" style="left:820.00px;top:172px;transform:scaleX(0.8553);width:225.65px;overflow:hidden;">73</span>
<div style="left:628px;top:205px;width:385px;height:1px;background:#A0A0A0;"></div>
<span class="t ui g" style="left:631.80px;top:188px;transform:scaleX(0.8640);width:182.17px;overflow:hidden;">DatabaseContextSettingsId</span>
<span class="t ui g" style="left:793.90px;top:188px;transform:scaleX(0.8680);width:252.42px;overflow:hidden;">1</span>
<div style="left:628px;top:221px;width:385px;height:1px;background:#A0A0A0;"></div>
<span class="t ui g" style="left:631.80px;top:204px;transform:scaleX(0.8581);width:183.42px;overflow:hidden;">Estimated Number of Rows</span>
<svg style="left:792px;top:207px" width="20" height="13" viewBox="0 0 20 13"><rect x="0.6" y="0.6" width="18.8" height="11.8" fill="#F6EE80" stroke="#000" stroke-width="1.2"/><path d="M4.2 4.9h12M4.2 8.9h12" stroke="#000" stroke-width="1.35" fill="none"/><path d="M7.6 11.2Q10.6 7.4 13.6 3" stroke="#000" stroke-width="1.5" fill="none"/></svg>
<span class="t ui g" style="left:820.00px;top:204px;transform:scaleX(0.8670);width:222.62px;overflow:hidden;">12967.8</span>
<div style="left:628px;top:237px;width:385px;height:1px;background:#A0A0A0;"></div>
<span class="t ui g" style="left:631.80px;top:220px;transform:scaleX(0.8425);width:186.83px;overflow:hidden;">Estimated Operator Cost</span>
<svg style="left:792px;top:223px" width="20" height="13" viewBox="0 0 20 13"><rect x="0.6" y="0.6" width="18.8" height="11.8" fill="#F6EE80" stroke="#000" stroke-width="1.2"/><path d="M4.2 4.9h12M4.2 8.9h12" stroke="#000" stroke-width="1.35" fill="none"/><path d="M7.6 11.2Q10.6 7.4 13.6 3" stroke="#000" stroke-width="1.5" fill="none"/></svg>
<span class="t ui g" style="left:820.00px;top:220px;transform:scaleX(0.8358);width:230.93px;overflow:hidden;">0.0127 (0%)</span>
<div style="left:628px;top:253px;width:385px;height:1px;background:#A0A0A0;"></div>
<span class="t ui g" style="left:631.80px;top:236px;transform:scaleX(0.8484);width:185.53px;overflow:hidden;">Estimated Subtree Cost</span>
<svg style="left:792px;top:239px" width="20" height="13" viewBox="0 0 20 13"><rect x="0.6" y="0.6" width="18.8" height="11.8" fill="#F6EE80" stroke="#000" stroke-width="1.2"/><path d="M4.2 4.9h12M4.2 8.9h12" stroke="#000" stroke-width="1.35" fill="none"/><path d="M7.6 11.2Q10.6 7.4 13.6 3" stroke="#000" stroke-width="1.5" fill="none"/></svg>
<span class="t ui g" style="left:820.00px;top:236px;transform:scaleX(0.8670);width:222.62px;overflow:hidden;">42.8476</span>
<div style="left:628px;top:269px;width:385px;height:1px;background:#A0A0A0;"></div>
<span class="t ui" style="left:631.80px;top:252px;transform:scaleX(0.8415);width:187.04px;overflow:hidden;">MemoryGrantInfo</span>
<svg style="left:613px;top:256px" width="8" height="12" viewBox="0 0 8 12"><path d="M1.8 2.6l3.9 3.9l-3.9 3.9" fill="none" stroke="#6c6c6c" stroke-width="1.75"/></svg>
<div style="left:628px;top:285px;width:385px;height:1px;background:#A0A0A0;"></div>
<span class="t ui" style="left:631.80px;top:268px;transform:scaleX(0.8452);width:186.22px;overflow:hidden;">MissingIndexes</span>
<svg style="left:613px;top:272px" width="8" height="12" viewBox="0 0 8 12"><path d="M1.8 2.6l3.9 3.9l-3.9 3.9" fill="none" stroke="#6c6c6c" stroke-width="1.75"/></svg>
<div style="left:628px;top:301px;width:385px;height:1px;background:#A0A0A0;"></div>
<span class="t ui g" style="left:631.80px;top:284px;transform:scaleX(0.8477);width:185.67px;overflow:hidden;">Optimization Level</span>
<span class="t ui g" style="left:793.90px;top:284px;transform:scaleX(0.8520);width:257.16px;overflow:hidden;">FULL</span>
<div style="left:628px;top:317px;width:385px;height:1px;background:#A0A0A0;"></div>
<span class="t ui" style="left:631.80px;top:300px;transform:scaleX(0.8509);width:184.99px;overflow:hidden;">OptimizerHardwareDependentProp</span>
<svg style="left:613px;top:304px" width="8" height="12" viewBox="0 0 8 12"><path d="M1.8 2.6l3.9 3.9l-3.9 3.9" fill="none" stroke="#6c6c6c" stroke-width="1.75"/></svg>
<div style="left:628px;top:333px;width:385px;height:1px;background:#A0A0A0;"></div>
<span class="t ui" style="left:631.80px;top:316px;transform:scaleX(0.8423);width:186.86px;overflow:hidden;">OptimizerStatsUsage</span>
<svg style="left:613px;top:320px" width="8" height="12" viewBox="0 0 8 12"><path d="M1.8 2.6l3.9 3.9l-3.9 3.9" fill="none" stroke="#6c6c6c" stroke-width="1.75"/></svg>
<div style="left:628px;top:349px;width:385px;height:1px;background:#A0A0A0;"></div>
<span class="t ui" style="left:631.80px;top:332px;transform:scaleX(0.8328);width:189.00px;overflow:hidden;">Parameter List</span>
<svg style="left:613px;top:336px" width="8" height="12" viewBox="0 0 8 12"><path d="M1.8 2.6l3.9 3.9l-3.9 3.9" fill="none" stroke="#6c6c6c" stroke-width="1.75"/></svg>
<span class="t ui" style="left:793.90px;top:332px;transform:scaleX(0.8753);width:250.30px;overflow:hidden;">@p__linq__1, @p__linq__0</span>
<div style="left:628px;top:365px;width:385px;height:1px;background:#A0A0A0;"></div>
<span class="t ui g" style="left:631.80px;top:348px;transform:scaleX(0.8623);width:182.54px;overflow:hidden;">ParentObjectId</span>
<span class="t ui g" style="left:793.90px;top:348px;transform:scaleX(0.8680);width:252.42px;overflow:hidden;">0</span>
<div style="left:628px;top:381px;width:385px;height:1px;background:#A0A0A0;"></div>
<span class="t ui g" style="left:631.80px;top:364px;transform:scaleX(0.8436);width:186.58px;overflow:hidden;">QueryHash</span>
<span class="t ui g" style="left:793.90px;top:364px;transform:scaleX(0.8664);width:252.89px;overflow:hidden;">0xAC522D58EF6D07DC</span>
<div style="left:628px;top:397px;width:385px;height:1px;background:#A0A0A0;"></div>
<span class="t ui g" style="left:631.80px;top:380px;transform:scaleX(0.8484);width:185.53px;overflow:hidden;">QueryPlanHash</span>
<svg style="left:792px;top:383px" width="20" height="13" viewBox="0 0 20 13"><rect x="0.6" y="0.6" width="18.8" height="11.8" fill="#F6EE80" stroke="#000" stroke-width="1.2"/><path d="M4.2 4.9h12M4.2 8.9h12" stroke="#000" stroke-width="1.35" fill="none"/><path d="M7.6 11.2Q10.6 7.4 13.6 3" stroke="#000" stroke-width="1.5" fill="none"/></svg>
<span class="t ui g" style="left:820.00px;top:380px;transform:scaleX(0.8752);width:220.53px;overflow:hidden;">0x515A3D7FA7432A25</span>
<div style="left:628px;top:413px;width:385px;height:1px;background:#A0A0A0;"></div>
<span class="t ui g" style="left:631.80px;top:396px;transform:scaleX(0.8547);width:184.16px;overflow:hidden;">RetrievedFromCache</span>
<span class="t ui g" style="left:793.90px;top:396px;transform:scaleX(0.8350);width:262.41px;overflow:hidden;">false</span>
<div style="left:628px;top:429px;width:385px;height:1px;background:#A0A0A0;"></div>
<span class="t ui g" style="left:631.80px;top:412px;transform:scaleX(0.8549);width:184.11px;overflow:hidden;">SecurityPolicyApplied</span>
<span class="t ui g" style="left:793.90px;top:412px;transform:scaleX(0.8050);width:272.16px;overflow:hidden;">False</span>
<div style="left:628px;top:445px;width:385px;height:1px;background:#A0A0A0;"></div>
<span class="t ui" style="left:631.80px;top:428px;transform:scaleX(0.8542);width:184.27px;overflow:hidden;">Set Options</span>
<svg style="left:613px;top:432px" width="8" height="12" viewBox="0 0 8 12"><path d="M1.8 2.6l3.9 3.9l-3.9 3.9" fill="none" stroke="#6c6c6c" stroke-width="1.75"/></svg>
<span class="t ui" style="left:793.90px;top:428px;transform:scaleX(0.8943);width:245.01px;overflow:hidden;">ANSI_NULLS: True, ANSI_PADDING: True, AN</span>
<div style="left:628px;top:461px;width:385px;height:1px;background:#A0A0A0;"></div>
<span class="t ui" style="left:631.80px;top:444px;transform:scaleX(0.8495);width:185.29px;overflow:hidden;">Statement</span>
<span class="t ui" style="left:793.90px;top:444px;transform:scaleX(0.8563);width:255.87px;overflow:hidden;">SELECT [Extent1].[</span>
<div style="left:884.9px;top:446.6px;width:128.1px;height:3.2px;background:linear-gradient(90deg,rgb(244,244,248) 0.0px,rgb(244,244,248) 7.1px,rgb(241,235,244) 7.1px,rgb(241,235,244) 14.2px,rgb(243,238,245) 14.2px,rgb(243,238,245) 21.4px,rgb(246,242,247) 21.4px,rgb(246,242,247) 28.5px,rgb(247,247,250) 28.5px,rgb(247,247,250) 35.6px,rgb(237,242,240) 35.6px,rgb(237,242,240) 42.7px,rgb(237,234,236) 42.7px,rgb(237,234,236) 49.8px,rgb(244,241,243) 49.8px,rgb(244,241,243) 56.9px,rgb(249,250,254) 56.9px,rgb(249,250,254) 64.1px,rgb(243,241,243) 64.1px,rgb(243,241,243) 71.2px,rgb(233,234,229) 71.2px,rgb(233,234,229) 78.3px,rgb(250,244,249) 78.3px,rgb(250,244,249) 85.4px,rgb(233,228,229) 85.4px,rgb(233,228,229) 92.5px,rgb(246,241,248) 92.5px,rgb(246,241,248) 99.6px,rgb(234,237,239) 99.6px,rgb(234,237,239) 106.8px,rgb(235,231,235) 106.8px,rgb(235,231,235) 113.9px,rgb(242,240,241) 113.9px,rgb(242,240,241) 121.0px,rgb(246,239,244) 121.0px,rgb(246,239,244) 128.1px);"></div>
<div style="left:884.9px;top:449.8px;width:128.1px;height:7.4px;background:linear-gradient(90deg,rgb(218,211,218) 0.0px,rgb(218,211,218) 7.1px,rgb(199,195,203) 7.1px,rgb(199,195,203) 14.2px,rgb(217,210,212) 14.2px,rgb(217,210,212) 21.4px,rgb(196,194,195) 21.4px,rgb(196,194,195) 28.5px,rgb(209,208,211) 28.5px,rgb(209,208,211) 35.6px,rgb(224,222,223) 35.6px,rgb(224,222,223) 42.7px,rgb(213,215,216) 42.7px,rgb(213,215,216) 49.8px,rgb(193,193,199) 49.8px,rgb(193,193,199) 56.9px,rgb(212,214,213) 56.9px,rgb(212,214,213) 64.1px,rgb(222,218,221) 64.1px,rgb(222,218,221) 71.2px,rgb(195,190,193) 71.2px,rgb(195,190,193) 78.3px,rgb(198,191,198) 78.3px,rgb(198,191,198) 85.4px,rgb(204,200,205) 85.4px,rgb(204,200,205) 92.5px,rgb(216,210,211) 92.5px,rgb(216,210,211) 99.6px,rgb(194,195,193) 99.6px,rgb(194,195,193) 106.8px,rgb(215,212,214) 106.8px,rgb(215,212,214) 113.9px,rgb(217,218,218) 113.9px,rgb(217,218,218) 121.0px,rgb(219,221,220) 121.0px,rgb(219,221,220) 128.1px);"></div>
<div style="left:884.9px;top:457.2px;width:128.1px;height:2.6px;background:linear-gradient(90deg,rgb(219,216,221) 0.0px,rgb(219,216,221) 7.1px,rgb(222,221,225) 7.1px,rgb(222,221,225) 14.2px,rgb(235,229,232) 14.2px,rgb(235,229,232) 21.4px,rgb(229,233,232) 21.4px,rgb(229,233,232) 28.5px,rgb(241,234,240) 28.5px,rgb(241,234,240) 35.6px,rgb(220,220,219) 35.6px,rgb(220,220,219) 42.7px,rgb(220,221,225) 42.7px,rgb(220,221,225) 49.8px,rgb(219,215,223) 49.8px,rgb(219,215,223) 56.9px,rgb(227,224,229) 56.9px,rgb(227,224,229) 64.1px,rgb(213,216,216) 64.1px,rgb(213,216,216) 71.2px,rgb(229,226,226) 71.2px,rgb(229,226,226) 78.3px,rgb(227,224,230) 78.3px,rgb(227,224,230) 85.4px,rgb(227,220,230) 85.4px,rgb(227,220,230) 92.5px,rgb(222,223,225) 92.5px,rgb(222,223,225) 99.6px,rgb(234,235,238) 99.6px,rgb(234,235,238) 106.8px,rgb(235,236,235) 106.8px,rgb(235,236,235) 113.9px,rgb(212,216,217) 113.9px,rgb(212,216,217) 121.0px,rgb(219,217,223) 121.0px,rgb(219,217,223) 128.1px);"></div>
<div style="left:628px;top:477px;width:385px;height:1px;background:#A0A0A0;"></div>
<span class="t ui g" style="left:631.80px;top:460px;transform:scaleX(0.8575);width:183.56px;overflow:hidden;">StatementParameterizationType</span>
<span class="t ui g" style="left:793.90px;top:460px;transform:scaleX(0.8680);width:252.42px;overflow:hidden;">1</span>
<div style="left:628px;top:493px;width:385px;height:1px;background:#A0A0A0;"></div>
<span class="t ui g" style="left:631.80px;top:476px;transform:scaleX(0.8614);width:182.73px;overflow:hidden;">StatementSqlHandle</span>
<span class="t ui g" style="left:793.90px;top:476px;transform:scaleX(0.8694);width:252.01px;overflow:hidden;">0x09007D0733FBF64D94BA7BDABE61373A4</span>
<span class="t ui" style="left:1022.90px;top:29px;transform:scaleX(0.8345);">Bottom Plan</span>
<div style="left:1020px;top:45px;width:402px;height:21px;background:#fff;border:1px solid #7A7A7A;"></div>
<div style="left:1023px;top:48px;width:48px;height:13px;background:#0078D7;"></div>
<span class="t ui" style="left:1024.50px;top:45px;transform:scaleX(0.9595);color:#fff;">SELECT</span>
<svg style="left:1407px;top:52px" width="12" height="8" viewBox="0 0 12 8"><path d="M1.5 1.5l4.5 4.5l4.5-4.5" fill="none" stroke="#444" stroke-width="1.1"/></svg>
<div style="left:1020px;top:92px;width:402px;height:422px;background:#fff;border-left:1px solid #A0A0A0;border-top:1px solid #A0A0A0;border-right:1px solid #A0A0A0;"></div>
<div style="left:1021px;top:93px;width:21px;height:401px;background:#A0A0A0;"></div>
<div style="left:1201px;top:93px;width:1px;height:400px;background:#A0A0A0;"></div>
<div style="left:1042px;top:109px;width:379px;height:1px;background:#A0A0A0;"></div>
<div style="left:1042px;top:93px;width:159px;height:16px;background:#A0A0A0;"></div>
<span class="t ui" style="left:1045.80px;top:92px;transform:scaleX(0.8724);width:176.97px;overflow:hidden;">Actual Number of Rows</span>
<svg style="left:1027px;top:96px" width="8" height="12" viewBox="0 0 8 12"><path d="M1.8 2.6l3.9 3.9l-3.9 3.9" fill="none" stroke="#6c6c6c" stroke-width="1.75"/></svg>
<span class="t ui" style="left:1204.90px;top:92px;transform:scaleX(0.8680);width:248.96px;overflow:hidden;">0</span>
<div style="left:1042px;top:125px;width:379px;height:1px;background:#A0A0A0;"></div>
<span class="t ui g" style="left:1045.80px;top:108px;transform:scaleX(0.8599);width:179.56px;overflow:hidden;">Cached plan size</span>
<svg style="left:1203px;top:111px" width="20" height="13" viewBox="0 0 20 13"><rect x="0.6" y="0.6" width="18.8" height="11.8" fill="#F6EE80" stroke="#000" stroke-width="1.2"/><path d="M4.2 4.9h12M4.2 8.9h12" stroke="#000" stroke-width="1.35" fill="none"/><path d="M7.6 11.2Q10.6 7.4 13.6 3" stroke="#000" stroke-width="1.5" fill="none"/></svg>
<span class="t ui g" style="left:1231.00px;top:108px;transform:scaleX(0.8463);width:224.51px;overflow:hidden;">56 KB</span>
<div style="left:1042px;top:141px;width:379px;height:1px;background:#A0A0A0;"></div>
<span class="t ui g" style="left:1045.80px;top:124px;transform:scaleX(0.8499);width:181.66px;overflow:hidden;">CardinalityEstimationModelVersion</span>
<span class="t ui g" style="left:1204.90px;top:124px;transform:scaleX(0.8504);width:254.12px;overflow:hidden;">120</span>
<div style="left:1042px;top:157px;width:379px;height:1px;background:#A0A0A0;"></div>
<span class="t ui g" style="left:1045.80px;top:140px;transform:scaleX(0.8348);width:184.96px;overflow:hidden;">CompileCPU</span>
<svg style="left:1203px;top:143px" width="20" height="13" viewBox="0 0 20 13"><rect x="0.6" y="0.6" width="18.8" height="11.8" fill="#F6EE80" stroke="#000" stroke-width="1.2"/><path d="M4.2 4.9h12M4.2 8.9h12" stroke="#000" stroke-width="1.35" fill="none"/><path d="M7.6 11.2Q10.6 7.4 13.6 3" stroke="#000" stroke-width="1.5" fill="none"/></svg>
<span class="t ui g" style="left:1231.00px;top:140px;transform:scaleX(0.8680);width:218.89px;overflow:hidden;">4</span>
<div style="left:1042px;top:173px;width:379px;height:1px;background:#A0A0A0;"></div>
<span class="t ui g" style="left:1045.80px;top:156px;transform:scaleX(0.8296);width:186.12px;overflow:hidden;">CompileMemory</span>
<svg style="left:1203px;top:159px" width="20" height="13" viewBox="0 0 20 13"><rect x="0.6" y="0.6" width="18.8" height="11.8" fill="#F6EE80" stroke="#000" stroke-width="1.2"/><path d="M4.2 4.9h12M4.2 8.9h12" stroke="#000" stroke-width="1.35" fill="none"/><path d="M7.6 11.2Q10.6 7.4 13.6 3" stroke="#000" stroke-width="1.5" fill="none"/></svg>
<span class="t ui g" style="left:1231.00px;top:156px;transform:scaleX(0.8553);width:222.14px;overflow:hidden;">560</span>
<div style="left:1042px;top:189px;width:379px;height:1px;background:#A0A0A0;"></div>
<span class="t ui g" style="left:1045.80px;top:172px;transform:scaleX(0.8270);width:186.70px;overflow:hidden;">CompileTime</span>
<svg style="left:1203px;top:175px" width="20" height="13" viewBox="0 0 20 13"><rect x="0.6" y="0.6" width="18.8" height="11.8" fill="#F6EE80" stroke="#000" stroke-width="1.2"/><path d="M4.2 4.9h12M4.2 8.9h12" stroke="#000" stroke-width="1.35" fill="none"/><path d="M7.6 11.2Q10.6 7.4 13.6 3" stroke="#000" stroke-width="1.5" fill="none"/></svg>
<span class="t ui g" style="left:1231.00px;top:172px;transform:scaleX(0.8680);width:218.89px;overflow:hidden;">4</span>
<div style="left:1042px;top:205px;width:379px;height:1px;background:#A0A0A0;"></div>
<span class="t ui g" style="left:1045.80px;top:188px;transform:scaleX(0.8640);width:178.70px;overflow:hidden;">DatabaseContextSettingsId</span>
<span class="t ui g" style="left:1204.90px;top:188px;transform:scaleX(0.8680);width:248.96px;overflow:hidden;">1</span>
<div style="left:1042px;top:221px;width:379px;height:1px;background:#A0A0A0;"></div>
<span class="t ui g" style="left:1045.80px;top:204px;transform:scaleX(0.8581);width:179.92px;overflow:hidden;">Estimated Number of Rows</span>
<svg style="left:1203px;top:207px" width="20" height="13" viewBox="0 0 20 13"><rect x="0.6" y="0.6" width="18.8" height="11.8" fill="#F6EE80" stroke="#000" stroke-width="1.2"/><path d="M4.2 4.9h12M4.2 8.9h12" stroke="#000" stroke-width="1.35" fill="none"/><path d="M7.6 11.2Q10.6 7.4 13.6 3" stroke="#000" stroke-width="1.5" fill="none"/></svg>
<span class="t ui g" style="left:1231.00px;top:204px;transform:scaleX(0.8827);width:215.26px;overflow:hidden;">773909</span>
<div style="left:1042px;top:237px;width:379px;height:1px;background:#A0A0A0;"></div>
<span class="t ui g" style="left:1045.80px;top:220px;transform:scaleX(0.8425);width:183.26px;overflow:hidden;">Estimated Operator Cost</span>
<svg style="left:1203px;top:223px" width="20" height="13" viewBox="0 0 20 13"><rect x="0.6" y="0.6" width="18.8" height="11.8" fill="#F6EE80" stroke="#000" stroke-width="1.2"/><path d="M4.2 4.9h12M4.2 8.9h12" stroke="#000" stroke-width="1.35" fill="none"/><path d="M7.6 11.2Q10.6 7.4 13.6 3" stroke="#000" stroke-width="1.5" fill="none"/></svg>
<span class="t ui g" style="left:1231.00px;top:220px;transform:scaleX(0.8335);width:227.94px;overflow:hidden;">2.644 (0%)</span>
<div style="left:1042px;top:253px;width:379px;height:1px;background:#A0A0A0;"></div>
<span class="t ui g" style="left:1045.80px;top:236px;transform:scaleX(0.8484);width:182.00px;overflow:hidden;">Estimated Subtree Cost</span>
<svg style="left:1203px;top:239px" width="20" height="13" viewBox="0 0 20 13"><rect x="0.6" y="0.6" width="18.8" height="11.8" fill="#F6EE80" stroke="#000" stroke-width="1.2"/><path d="M4.2 4.9h12M4.2 8.9h12" stroke="#000" stroke-width="1.35" fill="none"/><path d="M7.6 11.2Q10.6 7.4 13.6 3" stroke="#000" stroke-width="1.5" fill="none"/></svg>
<span class="t ui g" style="left:1231.00px;top:236px;transform:scaleX(0.8828);width:215.22px;overflow:hidden;">972.253</span>
<div style="left:1042px;top:269px;width:379px;height:1px;background:#A0A0A0;"></div>
<span class="t ui" style="left:1045.80px;top:252px;transform:scaleX(0.8415);width:183.48px;overflow:hidden;">MemoryGrantInfo</span>
<svg style="left:1027px;top:256px" width="8" height="12" viewBox="0 0 8 12"><path d="M1.8 2.6l3.9 3.9l-3.9 3.9" fill="none" stroke="#6c6c6c" stroke-width="1.75"/></svg>
<div style="left:1042px;top:285px;width:379px;height:1px;background:#A0A0A0;"></div>
<span class="t ui" style="left:1045.80px;top:268px;transform:scaleX(0.8452);width:182.67px;overflow:hidden;">MissingIndexes</span>
<svg style="left:1027px;top:272px" width="8" height="12" viewBox="0 0 8 12"><path d="M1.8 2.6l3.9 3.9l-3.9 3.9" fill="none" stroke="#6c6c6c" stroke-width="1.75"/></svg>
<div style="left:1042px;top:301px;width:379px;height:1px;background:#A0A0A0;"></div>
<span class="t ui g" style="left:1045.80px;top:284px;transform:scaleX(0.8477);width:182.13px;overflow:hidden;">Optimization Level</span>
<span class="t ui g" style="left:1204.90px;top:284px;transform:scaleX(0.8520);width:253.64px;overflow:hidden;">FULL</span>
<div style="left:1042px;top:317px;width:379px;height:1px;background:#A0A0A0;"></div>
<span class="t ui" style="left:1045.80px;top:300px;transform:scaleX(0.8509);width:181.46px;overflow:hidden;">OptimizerHardwareDependentProp</span>
<svg style="left:1027px;top:304px" width="8" height="12" viewBox="0 0 8 12"><path d="M1.8 2.6l3.9 3.9l-3.9 3.9" fill="none" stroke="#6c6c6c" stroke-width="1.75"/></svg>
<div style="left:1042px;top:333px;width:379px;height:1px;background:#A0A0A0;"></div>
<span class="t ui" style="left:1045.80px;top:316px;transform:scaleX(0.8423);width:183.30px;overflow:hidden;">OptimizerStatsUsage</span>
<svg style="left:1027px;top:320px" width="8" height="12" viewBox="0 0 8 12"><path d="M1.8 2.6l3.9 3.9l-3.9 3.9" fill="none" stroke="#6c6c6c" stroke-width="1.75"/></svg>
<div style="left:1042px;top:349px;width:379px;height:1px;background:#A0A0A0;"></div>
<span class="t ui" style="left:1045.80px;top:332px;transform:scaleX(0.8328);width:185.40px;overflow:hidden;">Parameter List</span>
<svg style="left:1027px;top:336px" width="8" height="12" viewBox="0 0 8 12"><path d="M1.8 2.6l3.9 3.9l-3.9 3.9" fill="none" stroke="#6c6c6c" stroke-width="1.75"/></svg>
<span class="t ui" style="left:1204.90px;top:332px;transform:scaleX(0.8753);width:246.87px;overflow:hidden;">@p__linq__1, @p__linq__0</span>
<div style="left:1042px;top:365px;width:379px;height:1px;background:#A0A0A0;"></div>
<span class="t ui g" style="left:1045.80px;top:348px;transform:scaleX(0.8623);width:179.06px;overflow:hidden;">ParentObjectId</span>
<span class="t ui g" style="left:1204.90px;top:348px;transform:scaleX(0.8680);width:248.96px;overflow:hidden;">0</span>
<div style="left:1042px;top:381px;width:379px;height:1px;background:#A0A0A0;"></div>
<span class="t ui g" style="left:1045.80px;top:364px;transform:scaleX(0.8436);width:183.03px;overflow:hidden;">QueryHash</span>
<span class="t ui g" style="left:1204.90px;top:364px;transform:scaleX(0.8664);width:249.43px;overflow:hidden;">0xAC522D58EF6D07DC</span>
<div style="left:1042px;top:397px;width:379px;height:1px;background:#A0A0A0;"></div>
<span class="t ui g" style="left:1045.80px;top:380px;transform:scaleX(0.8484);width:182.00px;overflow:hidden;">QueryPlanHash</span>
<svg style="left:1203px;top:383px" width="20" height="13" viewBox="0 0 20 13"><rect x="0.6" y="0.6" width="18.8" height="11.8" fill="#F6EE80" stroke="#000" stroke-width="1.2"/><path d="M4.2 4.9h12M4.2 8.9h12" stroke="#000" stroke-width="1.35" fill="none"/><path d="M7.6 11.2Q10.6 7.4 13.6 3" stroke="#000" stroke-width="1.5" fill="none"/></svg>
<span class="t ui g" style="left:1231.00px;top:380px;transform:scaleX(0.8839);width:214.96px;overflow:hidden;">0xB0D49EA115B95597</span>
<div style="left:1042px;top:413px;width:379px;height:1px;background:#A0A0A0;"></div>
<span class="t ui g" style="left:1045.80px;top:396px;transform:scaleX(0.8547);width:180.65px;overflow:hidden;">RetrievedFromCache</span>
<span class="t ui g" style="left:1204.90px;top:396px;transform:scaleX(0.8350);width:258.82px;overflow:hidden;">false</span>
<div style="left:1042px;top:429px;width:379px;height:1px;background:#A0A0A0;"></div>
<span class="t ui g" style="left:1045.80px;top:412px;transform:scaleX(0.8549);width:180.60px;overflow:hidden;">SecurityPolicyApplied</span>
<span class="t ui g" style="left:1204.90px;top:412px;transform:scaleX(0.8050);width:268.44px;overflow:hidden;">False</span>
<div style="left:1042px;top:445px;width:379px;height:1px;background:#A0A0A0;"></div>
<span class="t ui" style="left:1045.80px;top:428px;transform:scaleX(0.8542);width:180.76px;overflow:hidden;">Set Options</span>
<svg style="left:1027px;top:432px" width="8" height="12" viewBox="0 0 8 12"><path d="M1.8 2.6l3.9 3.9l-3.9 3.9" fill="none" stroke="#6c6c6c" stroke-width="1.75"/></svg>
<span class="t ui" style="left:1204.90px;top:428px;transform:scaleX(0.8943);width:241.65px;overflow:hidden;">ANSI_NULLS: True, ANSI_PADDING: True, AN</span>
<div style="left:1042px;top:461px;width:379px;height:1px;background:#A0A0A0;"></div>
<span class="t ui" style="left:1045.80px;top:444px;transform:scaleX(0.8495);width:181.76px;overflow:hidden;">Statement</span>
<span class="t ui" style="left:1204.90px;top:444px;transform:scaleX(0.8563);width:252.36px;overflow:hidden;">SELECT [Extent1].[</span>
<div style="left:1295.9px;top:446.6px;width:125.1px;height:3.2px;background:linear-gradient(90deg,rgb(247,245,249) 0.0px,rgb(247,245,249) 6.9px,rgb(245,245,244) 6.9px,rgb(245,245,244) 13.9px,rgb(245,244,244) 13.9px,rgb(245,244,244) 20.8px,rgb(237,235,236) 20.8px,rgb(237,235,236) 27.8px,rgb(249,241,248) 27.8px,rgb(249,241,248) 34.7px,rgb(247,247,247) 34.7px,rgb(247,247,247) 41.7px,rgb(244,236,244) 41.7px,rgb(244,236,244) 48.6px,rgb(241,240,244) 48.6px,rgb(241,240,244) 55.6px,rgb(231,230,234) 55.6px,rgb(231,230,234) 62.5px,rgb(238,236,237) 62.5px,rgb(238,236,237) 69.5px,rgb(246,248,247) 69.5px,rgb(246,248,247) 76.4px,rgb(234,232,233) 76.4px,rgb(234,232,233) 83.4px,rgb(252,253,255) 83.4px,rgb(252,253,255) 90.3px,rgb(239,240,239) 90.3px,rgb(239,240,239) 97.3px,rgb(239,242,246) 97.3px,rgb(239,242,246) 104.2px,rgb(244,244,247) 104.2px,rgb(244,244,247) 111.2px,rgb(232,227,229) 111.2px,rgb(232,227,229) 118.1px,rgb(234,227,231) 118.1px,rgb(234,227,231) 125.1px);"></div>
<div style="left:1295.9px;top:449.8px;width:125.1px;height:7.4px;background:linear-gradient(90deg,rgb(226,225,224) 0.0px,rgb(226,225,224) 6.9px,rgb(208,210,212) 6.9px,rgb(208,210,212) 13.9px,rgb(194,192,196) 13.9px,rgb(194,192,196) 20.8px,rgb(222,216,224) 20.8px,rgb(222,216,224) 27.8px,rgb(192,188,192) 27.8px,rgb(192,188,192) 34.7px,rgb(208,206,208) 34.7px,rgb(208,206,208) 41.7px,rgb(216,221,222) 41.7px,rgb(216,221,222) 48.6px,rgb(214,211,210) 48.6px,rgb(214,211,210) 55.6px,rgb(183,184,188) 55.6px,rgb(183,184,188) 62.5px,rgb(189,187,190) 62.5px,rgb(189,187,190) 69.5px,rgb(185,186,185) 69.5px,rgb(185,186,185) 76.4px,rgb(216,217,218) 76.4px,rgb(216,217,218) 83.4px,rgb(204,201,209) 83.4px,rgb(204,201,209) 90.3px,rgb(212,214,211) 90.3px,rgb(212,214,211) 97.3px,rgb(208,208,211) 97.3px,rgb(208,208,211) 104.2px,rgb(185,186,183) 104.2px,rgb(185,186,183) 111.2px,rgb(209,212,213) 111.2px,rgb(209,212,213) 118.1px,rgb(222,225,227) 118.1px,rgb(222,225,227) 125.1px);"></div>
<div style="left:1295.9px;top:457.2px;width:125.1px;height:2.6px;background:linear-gradient(90deg,rgb(224,227,231) 0.0px,rgb(224,227,231) 6.9px,rgb(232,227,236) 6.9px,rgb(232,227,236) 13.9px,rgb(238,235,238) 13.9px,rgb(238,235,238) 20.8px,rgb(235,238,238) 20.8px,rgb(235,238,238) 27.8px,rgb(227,232,232) 27.8px,rgb(227,232,232) 34.7px,rgb(221,217,225) 34.7px,rgb(221,217,225) 41.7px,rgb(227,220,227) 41.7px,rgb(227,220,227) 48.6px,rgb(221,222,230) 48.6px,rgb(221,222,230) 55.6px,rgb(239,237,237) 55.6px,rgb(239,237,237) 62.5px,rgb(216,216,216) 62.5px,rgb(216,216,216) 69.5px,rgb(238,239,240) 69.5px,rgb(238,239,240) 76.4px,rgb(214,216,221) 76.4px,rgb(214,216,221) 83.4px,rgb(216,218,217) 83.4px,rgb(216,218,217) 90.3px,rgb(224,227,226) 90.3px,rgb(224,227,226) 97.3px,rgb(225,225,225) 97.3px,rgb(225,225,225) 104.2px,rgb(220,223,222) 104.2px,rgb(220,223,222) 111.2px,rgb(225,229,231) 111.2px,rgb(225,229,231) 118.1px,rgb(230,230,238) 118.1px,rgb(230,230,238) 125.1px);"></div>
<div style="left:1042px;top:477px;width:379px;height:1px;background:#A0A0A0;"></div>
<span class="t ui g" style="left:1045.80px;top:460px;transform:scaleX(0.8575);width:180.06px;overflow:hidden;">StatementParameterizationType</span>
<span class="t ui g" style="left:1204.90px;top:460px;transform:scaleX(0.8680);width:248.96px;overflow:hidden;">1</span>
<div style="left:1042px;top:493px;width:379px;height:1px;background:#A0A0A0;"></div>
<span class="t ui g" style="left:1045.80px;top:476px;transform:scaleX(0.8614);width:179.25px;overflow:hidden;">StatementSqlHandle</span>
<span class="t ui g" style="left:1204.90px;top:476px;transform:scaleX(0.8694);width:248.56px;overflow:hidden;">0x09007D0733FBF64D94BA7BDABE61373A4</span>
<svg style="left:611px;top:70px" width="18" height="18" viewBox="0 0 18 18"><rect x="0.6" y="1.6" width="5.8" height="5.8" rx="1.3" fill="#fff" stroke="#4a8fd6" stroke-width="1.1"/><rect x="0.6" y="10.7" width="5.8" height="5.8" rx="1.3" fill="#fff" stroke="#4a8fd6" stroke-width="1.1"/><path d="M1.7 4.5h3.6M3.5 2.7v3.6M1.7 13.6h3.6M3.5 11.8v3.6" stroke="#000" stroke-width="1.3"/><path d="M8.2 3.5h3.8M8.2 14.4h3.8" stroke="#3a3a3a" stroke-width="1.1"/><path d="M8.2 5.4h3.8M13 5.4h3.2M8.2 7.4h3.8M13 7.4h3.2M8.2 9.5h3.8M13 9.5h3.2M8.2 11.5h3.8M13 11.5h3.2M8.2 16.5h3.8M13 16.5h3.2" stroke="#8f8cc0" stroke-width="0.9"/><path d="M10.4 5.4h1.6M14.8 5.4h1.4M10.4 7.4h1.6M14.8 7.4h1.4M10.4 9.5h1.6M14.8 9.5h1.4M10.4 11.5h1.6M14.8 11.5h1.4M10.4 16.5h1.6M14.8 16.5h1.4" stroke="#5f9e9e" stroke-width="0.9"/></svg>
<div style="left:631px;top:68px;width:23px;height:21px;background:#C2DDF3;border:1px solid #8CC6F5;"></div>
<svg style="left:631px;top:68px" width="23" height="21" viewBox="0 0 23 21"><text x="3.2" y="9.8" font-family="Liberation Serif,serif" font-weight="bold" font-size="9.5" fill="#2a35c4">A</text><text x="3.6" y="17.8" font-family="Liberation Serif,serif" font-weight="bold" font-size="9.5" fill="#c0272d">Z</text><path d="M15.5 3v14" stroke="#000" stroke-width="1.3"/><path d="M13.1 12.4L15.5 17.6L17.9 12.4Z" fill="#000"/></svg>
<div style="left:656px;top:69px;width:1px;height:21px;background:#7f7f7f;"></div>
<svg style="left:663px;top:70px" width="17" height="17" viewBox="0 0 17 17"><rect x="0.5" y="1.5" width="15" height="14" fill="#dcdcdc" stroke="#b4b4b4"/><rect x="0.5" y="1.5" width="15" height="2.4" fill="#bdbdbd"/><path d="M2.5 6.5h4.5l1 1h5.5v6h-11z" fill="#e4e4e4" stroke="#bcbcbc" stroke-width="0.9"/><path d="M4 9.5h1M4 11.5h1M6.5 11.5h4" stroke="#aaa" stroke-width="1"/></svg>
<div style="left:606px;top:91px;width:408px;height:1px;background:#fff;"></div>
<svg style="left:1025px;top:70px" width="18" height="18" viewBox="0 0 18 18"><rect x="0.6" y="1.6" width="5.8" height="5.8" rx="1.3" fill="#fff" stroke="#4a8fd6" stroke-width="1.1"/><rect x="0.6" y="10.7" width="5.8" height="5.8" rx="1.3" fill="#fff" stroke="#4a8fd6" stroke-width="1.1"/><path d="M1.7 4.5h3.6M3.5 2.7v3.6M1.7 13.6h3.6M3.5 11.8v3.6" stroke="#000" stroke-width="1.3"/><path d="M8.2 3.5h3.8M8.2 14.4h3.8" stroke="#3a3a3a" stroke-width="1.1"/><path d="M8.2 5.4h3.8M13 5.4h3.2M8.2 7.4h3.8M13 7.4h3.2M8.2 9.5h3.8M13 9.5h3.2M8.2 11.5h3.8M13 11.5h3.2M8.2 16.5h3.8M13 16.5h3.2" stroke="#8f8cc0" stroke-width="0.9"/><path d="M10.4 5.4h1.6M14.8 5.4h1.4M10.4 7.4h1.6M14.8 7.4h1.4M10.4 9.5h1.6M14.8 9.5h1.4M10.4 11.5h1.6M14.8 11.5h1.4M10.4 16.5h1.6M14.8 16.5h1.4" stroke="#5f9e9e" stroke-width="0.9"/></svg>
<div style="left:1045px;top:68px;width:23px;height:21px;background:#C2DDF3;border:1px solid #8CC6F5;"></div>
<svg style="left:1045px;top:68px" width="23" height="21" viewBox="0 0 23 21"><text x="3.2" y="9.8" font-family="Liberation Serif,serif" font-weight="bold" font-size="9.5" fill="#2a35c4">A</text><text x="3.6" y="17.8" font-family="Liberation Serif,serif" font-weight="bold" font-size="9.5" fill="#c0272d">Z</text><path d="M15.5 3v14" stroke="#000" stroke-width="1.3"/><path d="M13.1 12.4L15.5 17.6L17.9 12.4Z" fill="#000"/></svg>
<div style="left:1070px;top:69px;width:1px;height:21px;background:#7f7f7f;"></div>
<svg style="left:1077px;top:70px" width="17" height="17" viewBox="0 0 17 17"><rect x="0.5" y="1.5" width="15" height="14" fill="#dcdcdc" stroke="#b4b4b4"/><rect x="0.5" y="1.5" width="15" height="2.4" fill="#bdbdbd"/><path d="M2.5 6.5h4.5l1 1h5.5v6h-11z" fill="#e4e4e4" stroke="#bcbcbc" stroke-width="0.9"/><path d="M4 9.5h1M4 11.5h1M6.5 11.5h4" stroke="#aaa" stroke-width="1"/></svg>
<div style="left:1020px;top:91px;width:402px;height:1px;background:#fff;"></div>
<svg style="left:1370px;top:14px" width="50" height="14" viewBox="0 0 50 14"><path d="M4.2 5h7.8l-3.9 3.9z" fill="#6f5f3a"/><g fill="none" stroke="#6f5f3a" stroke-width="1.1"><path d="M19 7.4h4.5M23.5 4.1v6.7M23.5 5.6h6v3.6h-6M23.5 8.7h6"/><path d="M36.7 3.3l8.6 7.4M45.3 3.3l-8.6 7.4" stroke-width="1.3"/></g></svg>
<svg style="left:7.7px;top:30.5px" width="92.5" height="25.6" viewBox="0 0 92.5 25.6"><rect x="2.90" y="2.90" width="86.70" height="19.80" rx="9.90" fill="none" stroke="#fb2c6b" stroke-width="1.8"/></svg>
<svg style="left:5.3px;top:375.5px" width="100.3" height="26.0" viewBox="0 0 100.3 26.0"><rect x="2.90" y="2.90" width="94.50" height="20.20" rx="10.10" fill="none" stroke="#fb2c6b" stroke-width="1.8"/></svg>
<svg style="left:606.1px;top:26.2px" width="59.3" height="25.3" viewBox="0 0 59.3 25.3"><rect x="2.90" y="2.90" width="53.50" height="19.50" rx="9.75" fill="none" stroke="#fb2c6b" stroke-width="1.8"/></svg>
<svg style="left:1019.4px;top:22.2px" width="71.5" height="30.0" viewBox="0 0 71.5 30.0"><rect x="2.90" y="2.90" width="65.70" height="24.20" rx="12.10" fill="none" stroke="#fb2c6b" stroke-width="1.8"/></svg>
</div></body></html>
